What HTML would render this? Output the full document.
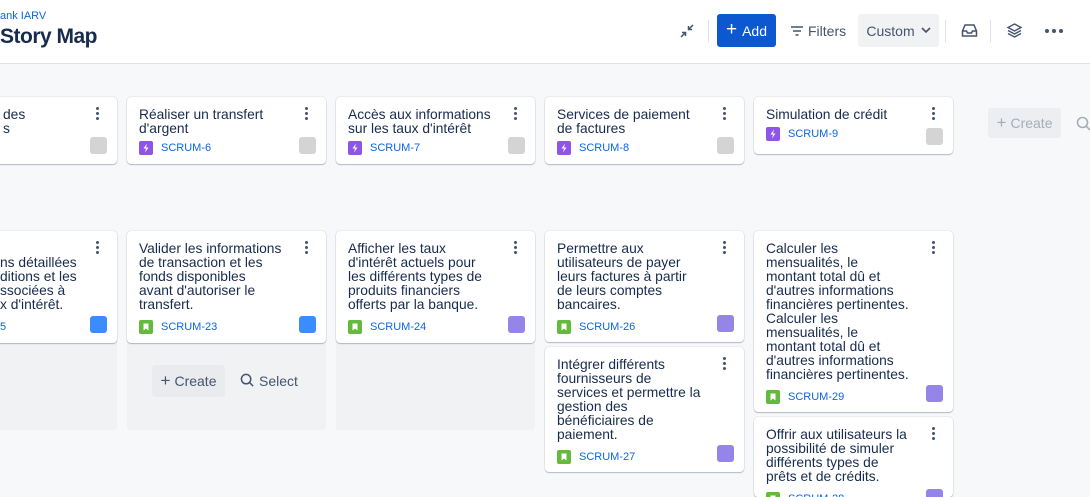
<!DOCTYPE html>
<html><head><meta charset="utf-8"><style>
*{box-sizing:border-box;margin:0;padding:0}
html,body{width:1090px;height:497px;overflow:hidden}
body{background:#f7f8f9;font-family:"Liberation Sans",sans-serif;color:#172b4d;position:relative}
.wrap{position:absolute;left:0;top:0;width:1090px;height:497px;overflow:hidden}
.hdr{position:absolute;left:0;top:0;width:1090px;height:64px;background:#fff;border-bottom:1px solid #dfe1e6}
.bc{position:absolute;left:0;top:10px;font-size:11px;color:#0c66e4}
.ttl{position:absolute;left:0;top:25px;font-size:21px;font-weight:bold;color:#172b4d;letter-spacing:-0.5px}
.colbg{position:absolute;background:#f1f2f4;border-radius:3px}
.card{position:absolute;width:199px;background:#fff;border-radius:4px;box-shadow:0 1px 1px rgba(9,30,66,.25),0 0 1px rgba(9,30,66,.31);padding:11px 28px 0 12px;font-size:13.8px;line-height:14px;color:#172b4d;white-space:nowrap}
.dots{position:absolute;right:18px;top:10px;width:3px}
.dots i{display:block;width:3px;height:3px;border-radius:50%;background:#44546f;margin-bottom:2px}
.key{display:flex;align-items:center;margin-top:7px;font-size:11px;color:#0c66e4;height:16px}
.ic{width:14px;height:14px;border-radius:2px;margin-right:8px;position:relative;display:inline-block}
.ep{background:#8f55e6}
.st{background:#63ba3c}
.ep svg,.st svg{position:absolute;left:0;top:0}
.av{position:absolute;right:10px;bottom:10px;width:17px;height:17px;border-radius:3px}
.g{background:#d4d4d4}.b{background:#3b8cff}.p{background:#9585e8}
.btn{position:absolute;font-size:14px;display:flex;align-items:center;justify-content:center;border-radius:3px}
.div{position:absolute;top:20px;width:1px;height:22px;background:#dfe1e6}
</style></head><body><div class="wrap">
<div class="hdr">
<div class="bc">ank IARV</div>
<div class="ttl">Story Map</div>
<svg style="position:absolute;left:679px;top:23px" width="16" height="16" viewBox="0 0 16 16" fill="none" stroke="#44546f" stroke-width="1.5"><path d="M14 2L9.5 6.5M9.5 3v3.5H13M2 14l4.5-4.5M3 9.5h3.5V13"/></svg>
<div class="div" style="left:708px"></div>
<div class="btn" style="left:717px;top:14px;width:59px;height:33px;background:#0c58d0;color:#fff"><span style="font-size:19px;margin-right:5px;margin-top:-2px">+</span>Add</div>
<svg style="position:absolute;left:790px;top:25px" width="14" height="12" viewBox="0 0 14 12" stroke="#44546f" stroke-width="1.5"><path d="M1 2h12M3 6h8M5.5 10h3"/></svg>
<div class="btn" style="left:808px;top:14px;height:33px;color:#44546f">Filters</div>
<div class="btn" style="left:858px;top:14px;width:81px;height:33px;background:#f1f2f4;color:#44546f">Custom<svg style="margin-left:6px" width="10" height="7" viewBox="0 0 10 7" fill="none" stroke="#44546f" stroke-width="1.6"><path d="M1 1l4 4 4-4"/></svg></div>
<div class="div" style="left:945px"></div>
<svg style="position:absolute;left:961px;top:23px" width="17" height="15" viewBox="0 0 17 15" fill="none" stroke="#44546f" stroke-width="1.5"><path d="M1.5 8l2.5-6h9l2.5 6v5h-14zM1.5 8h4l1 2h4l1-2h4"/></svg>
<div class="div" style="left:990px"></div>
<svg style="position:absolute;left:1006px;top:22px" width="17" height="17" viewBox="0 0 17 17" fill="none" stroke="#44546f" stroke-width="1.4"><path d="M8.5 2l6.5 3.5-6.5 3.5-6.5-3.5zM2 8.5l6.5 3.5 6.5-3.5M2 11.5l6.5 3.5 6.5-3.5"/></svg>
<div style="position:absolute;left:1045px;top:29px;display:flex;gap:3px"><i style="width:4px;height:4px;border-radius:50%;background:#44546f"></i><i style="width:4px;height:4px;border-radius:50%;background:#44546f"></i><i style="width:4px;height:4px;border-radius:50%;background:#44546f"></i></div>
</div>

<div class="colbg" style="left:-82px;top:231px;width:199px;height:199px"></div>
<div class="colbg" style="left:127px;top:231px;width:199px;height:199px"></div>
<div class="colbg" style="left:336px;top:231px;width:199px;height:199px"></div>

<!-- row 1 -->
<div class="card" style="left:-82px;top:97px;height:67px;padding-left:85px">des<br>s<div class="av g"></div><div class="dots"><i></i><i></i><i></i></div></div>
<div class="card" style="left:127px;top:97px;height:67px">Réaliser un transfert<br>d'argent<div class="key" style="margin-top:4px"><span class="ic ep"><svg width="14" height="14"><path d="M8 2.5L4.5 7.5H7l-1 4 3.5-5H7z" fill="#fff"/></svg></span>SCRUM-6</div><div class="av g"></div><div class="dots"><i></i><i></i><i></i></div></div>
<div class="card" style="left:336px;top:97px;height:67px">Accès aux informations<br>sur les taux d'intérêt<div class="key" style="margin-top:4px"><span class="ic ep"><svg width="14" height="14"><path d="M8 2.5L4.5 7.5H7l-1 4 3.5-5H7z" fill="#fff"/></svg></span>SCRUM-7</div><div class="av g"></div><div class="dots"><i></i><i></i><i></i></div></div>
<div class="card" style="left:545px;top:97px;height:67px">Services de paiement<br>de factures<div class="key" style="margin-top:4px"><span class="ic ep"><svg width="14" height="14"><path d="M8 2.5L4.5 7.5H7l-1 4 3.5-5H7z" fill="#fff"/></svg></span>SCRUM-8</div><div class="av g"></div><div class="dots"><i></i><i></i><i></i></div></div>
<div class="card" style="left:754px;top:97px;height:57px">Simulation de crédit<div class="key" style="margin-top:4px"><span class="ic ep"><svg width="14" height="14"><path d="M8 2.5L4.5 7.5H7l-1 4 3.5-5H7z" fill="#fff"/></svg></span>SCRUM-9</div><div class="av g" style="top:31px"></div><div class="dots"><i></i><i></i><i></i></div></div>
<div class="btn" style="left:988px;top:108px;width:73px;height:30px;background:#eceef1;color:#a5adba"><span style="font-size:17px;margin-right:4px">+</span>Create</div>
<svg style="position:absolute;left:1076px;top:116px" width="16" height="16" viewBox="0 0 16 16" fill="none" stroke="#a5adba" stroke-width="1.6"><circle cx="6.5" cy="6.5" r="5"/><path d="M10 10l4 4"/></svg>

<!-- row 2 -->
<div class="card" style="left:-82px;top:231px;height:112px;padding-left:82px"><br>ns détaillées<br>ditions et les<br>ssociées à<br>x d'intérêt.<div class="key" style="color:#0c66e4">5</div><div class="av b"></div><div class="dots"><i></i><i></i><i></i></div></div>
<div class="card" style="left:127px;top:231px;height:112px">Valider les informations<br>de transaction et les<br>fonds disponibles<br>avant d'autoriser le<br>transfert.<div class="key"><span class="ic st"><svg width="14" height="14"><path d="M4.5 3.5h5v7L7 8.5l-2.5 2z" fill="#fff"/></svg></span>SCRUM-23</div><div class="av b"></div><div class="dots"><i></i><i></i><i></i></div></div>
<div class="card" style="left:336px;top:231px;height:112px">Afficher les taux<br>d'intérêt actuels pour<br>les différents types de<br>produits financiers<br>offerts par la banque.<div class="key"><span class="ic st"><svg width="14" height="14"><path d="M4.5 3.5h5v7L7 8.5l-2.5 2z" fill="#fff"/></svg></span>SCRUM-24</div><div class="av p"></div><div class="dots"><i></i><i></i><i></i></div></div>
<div class="card" style="left:545px;top:231px;height:111px">Permettre aux<br>utilisateurs de payer<br>leurs factures à partir<br>de leurs comptes<br>bancaires.<div class="key"><span class="ic st"><svg width="14" height="14"><path d="M4.5 3.5h5v7L7 8.5l-2.5 2z" fill="#fff"/></svg></span>SCRUM-26</div><div class="av p"></div><div class="dots"><i></i><i></i><i></i></div></div>
<div class="card" style="left:545px;top:347px;height:125px">Intégrer différents<br>fournisseurs de<br>services et permettre la<br>gestion des<br>bénéficiaires de<br>paiement.<div class="key"><span class="ic st"><svg width="14" height="14"><path d="M4.5 3.5h5v7L7 8.5l-2.5 2z" fill="#fff"/></svg></span>SCRUM-27</div><div class="av p"></div><div class="dots"><i></i><i></i><i></i></div></div>
<div class="card" style="left:754px;top:231px;height:181px">Calculer les<br>mensualités, le<br>montant total dû et<br>d'autres informations<br>financières pertinentes.<br>Calculer les<br>mensualités, le<br>montant total dû et<br>d'autres informations<br>financières pertinentes.<div class="key"><span class="ic st"><svg width="14" height="14"><path d="M4.5 3.5h5v7L7 8.5l-2.5 2z" fill="#fff"/></svg></span>SCRUM-29</div><div class="av p"></div><div class="dots"><i></i><i></i><i></i></div></div>
<div class="card" style="left:754px;top:417px;height:80px;overflow:hidden">Offrir aux utilisateurs la<br>possibilité de simuler<br>différents types de<br>prêts et de crédits.<div class="key"><span class="ic st"><svg width="14" height="14"><path d="M4.5 3.5h5v7L7 8.5l-2.5 2z" fill="#fff"/></svg></span>SCRUM-28</div><div class="av p" style="bottom:auto;top:72px"></div><div class="dots"><i></i><i></i><i></i></div></div>

<div class="btn" style="left:152px;top:365px;width:73px;height:32px;background:#e9ebee;color:#44546f"><span style="font-size:17px;margin-right:4px">+</span>Create</div>
<svg style="position:absolute;left:240px;top:373px" width="15" height="15" viewBox="0 0 16 16" fill="none" stroke="#44546f" stroke-width="1.6"><circle cx="6.5" cy="6.5" r="5"/><path d="M10 10l4 4"/></svg>
<div class="btn" style="left:259px;top:365px;height:32px;color:#44546f">Select</div>
</div></body></html>
